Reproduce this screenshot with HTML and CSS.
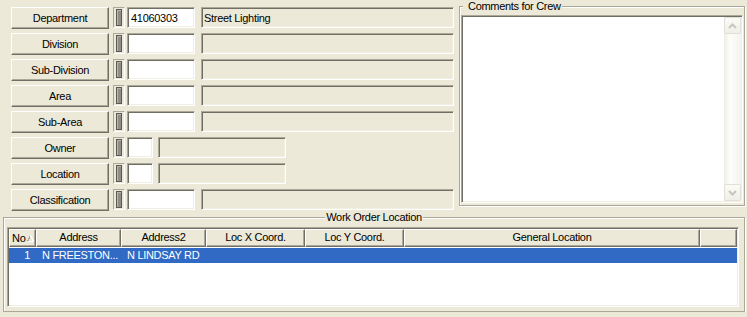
FILE: index.html
```html
<!DOCTYPE html>
<html lang="en">
<head>
    <meta charset="UTF-8">
    <title>Work Order</title>
    <link rel="stylesheet" href="styles.css">
</head>
<body>
    <div class="top">
        <div class="fields">
            <div class="row">
                <button class="lookup">Department</button>
                <span class="ind"><span class="bar"></span></span>
                <input class="code" value="41060303">
                <input class="desc" value="Street Lighting" readonly>
            </div>
            <div class="row">
                <button class="lookup">Division</button>
                <span class="ind"><span class="bar"></span></span>
                <input class="code">
                <input class="desc" readonly>
            </div>
            <div class="row">
                <button class="lookup">Sub-Division</button>
                <span class="ind"><span class="bar"></span></span>
                <input class="code">
                <input class="desc" readonly>
            </div>
            <div class="row">
                <button class="lookup">Area</button>
                <span class="ind"><span class="bar"></span></span>
                <input class="code">
                <input class="desc" readonly>
            </div>
            <div class="row">
                <button class="lookup">Sub-Area</button>
                <span class="ind"><span class="bar"></span></span>
                <input class="code">
                <input class="desc" readonly>
            </div>
            <div class="row short">
                <button class="lookup">Owner</button>
                <span class="ind"><span class="bar"></span></span>
                <input class="code">
                <input class="desc" readonly>
            </div>
            <div class="row short">
                <button class="lookup">Location</button>
                <span class="ind"><span class="bar"></span></span>
                <input class="code">
                <input class="desc" readonly>
            </div>
            <div class="row">
                <button class="lookup">Classification</button>
                <span class="ind"><span class="bar"></span></span>
                <input class="code">
                <input class="desc" readonly>
            </div>
        </div>

        <fieldset class="group comments">
            <legend>Comments for Crew</legend>
            <div class="memo">
                <div class="memo-text"></div>
                <div class="vscroll">
                    <span class="sbtn">
                        <svg width="9" height="6" viewBox="0 0 9 6"><polyline points="1,5 4.5,1.5 8,5" fill="none" stroke="#C8C6BA" stroke-width="2"/></svg>
                    </span>
                    <span class="track"></span>
                    <span class="sbtn">
                        <svg width="9" height="6" viewBox="0 0 9 6"><polyline points="1,1 4.5,4.5 8,1" fill="none" stroke="#C8C6BA" stroke-width="2"/></svg>
                    </span>
                </div>
            </div>
        </fieldset>
    </div>

    <fieldset class="group location">
        <legend>Work Order Location</legend>
        <div class="grid">
            <div class="grid-head">
                <div class="hcell no">No
                    <svg class="sort" width="7" height="7" viewBox="0 0 7 7" shape-rendering="crispEdges">
                        <line x1="0.5" y1="6.5" x2="3.5" y2="0.5" stroke="#ACA899"/>
                        <line x1="3.5" y1="0.5" x2="6.5" y2="6.5" stroke="#fff"/>
                        <line x1="0.5" y1="6.5" x2="6.5" y2="6.5" stroke="#fff"/>
                    </svg>
                </div>
                <div class="hcell">Address</div>
                <div class="hcell">Address2</div>
                <div class="hcell">Loc X Coord.</div>
                <div class="hcell">Loc Y Coord.</div>
                <div class="hcell">General Location</div>
                <div class="hcell"></div>
            </div>
            <div class="grid-row selected">
                <div class="cell num">1</div>
                <div class="cell">N FREESTON...</div>
                <div class="cell">N LINDSAY RD</div>
                <div class="cell"></div>
                <div class="cell"></div>
                <div class="cell"></div>
                <div class="cell"></div>
            </div>
        </div>
    </fieldset>
</body>
</html>
```

FILE: styles.css
```css
body {
    margin: 0;
    background-color: #ECE9D8;
    font-family: "Liberation Sans", Arial, sans-serif;
    font-size: 11px;
    letter-spacing: -0.3px;
    color: #000;
}
.top {
    display: flex;
    align-items: flex-start;
}
.fields {
    display: flex;
    flex-direction: column;
    gap: 4px;
    padding: 7px 0 0 11px;
    width: 443px;
}
.row {
    display: flex;
    align-items: flex-start;
    height: 22px;
}
.lookup {
    width: 98px;
    height: 22px;
    margin: 0;
    padding: 0;
    background-color: #ECE9D8;
    border: 1px solid;
    border-color: #fff #716F64 #716F64 #fff;
    box-shadow: inset -1px -1px 0 #ACA899;
    font: inherit;
    letter-spacing: inherit;
    color: #000;
}
.ind {
    box-sizing: border-box;
    width: 12px;
    height: 21px;
    margin-left: 4px;
    border: 1px solid;
    border-color: #ACA899 #fff #fff #ACA899;
    display: flex;
    justify-content: center;
    align-items: center;
}
.bar {
    box-sizing: border-box;
    width: 6px;
    height: 17px;
    background-color: #8E8D86;
    border: 1px solid #5A5952;
    box-shadow: inset 1px 1px 0 #B9B7AC;
}
.code, .desc {
    box-sizing: border-box;
    height: 21px;
    margin: 0;
    padding: 0 2px;
    border: 1px solid;
    border-color: #ACA899 #fff #fff #ACA899;
    box-shadow: inset 1px 1px 0 #716F64, inset -1px -1px 0 #F1EFE2;
    font: inherit;
    letter-spacing: inherit;
    color: #000;
    outline: none;
}
.code {
    width: 68px;
    margin-left: 2px;
    padding-left: 3px;
    background-color: #fff;
}
.desc {
    width: 253px;
    margin-left: 6px;
    background-color: #ECE9D8;
}
.short .code {
    width: 26px;
}
.short .desc {
    width: 128px;
    margin-left: 5px;
}

/* group boxes */
.group {
    margin: 0;
    padding: 0;
    min-width: 0;
    border: 1px solid #ACA899;
    box-shadow: inset 1px 1px 0 #fff, 1px 1px 0 #fff;
}
.group legend {
    line-height: 13px;
    background-color: #ECE9D8;
}
.comments {
    width: 284px;
    margin-left: 5px;
}
.comments legend {
    margin-left: 3px;
    padding: 0 1px 0 5px;
}
.memo {
    box-sizing: border-box;
    display: flex;
    width: 282px;
    height: 188px;
    margin: 2px 0 2px 1px;
    padding: 1px;
    background-color: #fff;
    border: 1px solid;
    border-color: #ACA899 #fff #fff #ACA899;
    box-shadow: inset 1px 1px 0 #716F64, inset -1px -1px 0 #F1EFE2;
}
.memo-text {
    flex: 1;
}
.vscroll {
    width: 17px;
    display: flex;
    flex-direction: column;
    background: linear-gradient(to right, #EEEDE5, #FDFDFA 35%, #F4F3EE);
}
.sbtn {
    box-sizing: border-box;
    height: 17px;
    border: 1px solid #E2E0D6;
    border-radius: 2px;
    background: linear-gradient(#FBFBF8, #EFEEE8);
    display: flex;
    align-items: center;
    justify-content: center;
}
.track {
    flex: 1;
}

.location {
    width: 740px;
    margin-left: 3px;
    padding-bottom: 4px;
}
.location legend {
    margin: 0 auto;
    padding: 0 1px;
}

/* list view */
.grid {
    box-sizing: border-box;
    width: 732px;
    height: 80px;
    margin: 3px 0 0 3px;
    padding: 1px;
    background-color: #fff;
    border: 1px solid;
    border-color: #ACA899 #fff #fff #ACA899;
    box-shadow: inset 1px 1px 0 #716F64, inset -1px -1px 0 #F1EFE2;
}
.grid-head, .grid-row {
    display: grid;
    grid-template-columns: 27px 85px 85px 99px 99px 296px 37px;
}
.grid-head {
    height: 18px;
}
.hcell {
    box-sizing: border-box;
    border: 1px solid;
    border-color: #fff #716F64 #716F64 #fff;
    box-shadow: inset -1px -1px 0 #ACA899;
    background-color: #ECE9D8;
    text-align: center;
    line-height: 15px;
    white-space: nowrap;
    overflow: hidden;
}
.hcell.no {
    display: flex;
    align-items: center;
    justify-content: space-between;
    padding: 0 1px 0 2px;
}
.grid-row {
    height: 15px;
    margin-top: 1px;
    line-height: 15px;
}
.selected {
    background-color: #316AC5;
    color: #fff;
}
.cell {
    padding-left: 6px;
    white-space: nowrap;
    overflow: hidden;
}
.cell.num {
    padding: 0 6px 0 0;
    text-align: right;
}
```
